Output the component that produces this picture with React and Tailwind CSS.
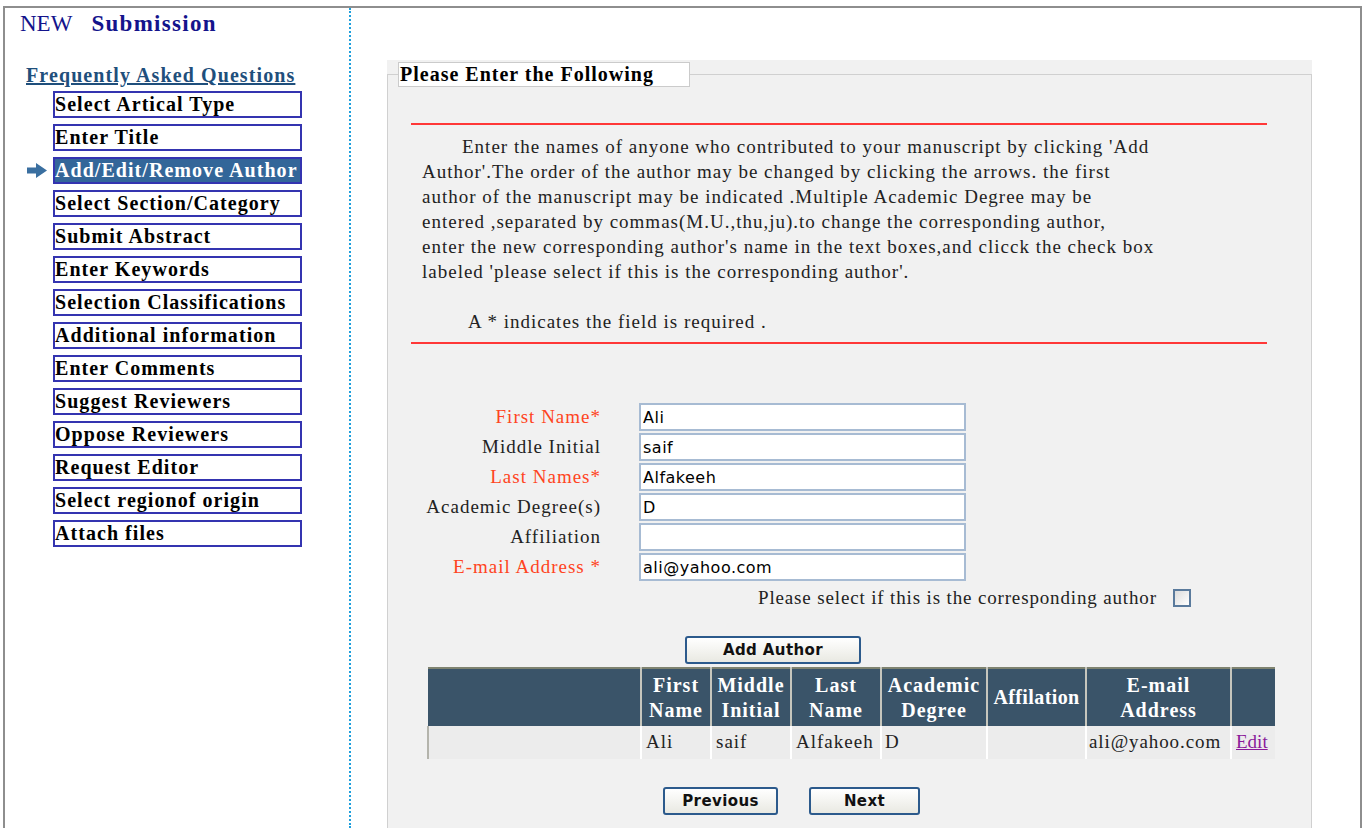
import React from 'react';

const MENU = [
  'Select Artical Type',
  'Enter Title',
  'Add/Edit/Remove Author',
  'Select Section/Category',
  'Submit Abstract',
  'Enter Keywords',
  'Selection Classifications',
  'Additional information',
  'Enter Comments',
  'Suggest Reviewers',
  'Oppose Reviewers',
  'Request Editor',
  'Select regionof origin',
  'Attach files',
];

const FIELDS = [
  { label: 'First Name*', value: 'Ali', req: true },
  { label: 'Middle Initial', value: 'saif' },
  { label: 'Last Names*', value: 'Alfakeeh', req: true },
  { label: 'Academic Degree(s)', value: 'D' },
  { label: 'Affiliation', value: '' },
  { label: 'E-mail Address *', value: 'ali@yahoo.com', req: true },
];

// intro text, broken where the original page wraps it
const INTRO = [
  "Enter the names of anyone who contributed to your manuscript by clicking 'Add",
  "Author'.The order of the author may be changed by clicking the arrows. the first",
  'author of the manuscript may be indicated .Multiple Academic Degree may be',
  'entered ,separated by commas(M.U.,thu,ju).to change the corresponding author,',
  "enter the new corresponding author's name in the text boxes,and clicck the check box",
  "labeled 'please select if this is the corresponding author'.",
];

const serif = "font-['Liberation_Serif','Times_New_Roman',serif]";
const sans = "font-['DejaVu_Sans','Liberation_Sans',sans-serif]";

function Btn({ w, children }) {
  return (
    <button
      className={`h-[28px] ${w} rounded-[3px] border-2 border-[#2c5a8c] bg-gradient-to-b from-white to-[#e9e9e2] text-[15px] font-bold tracking-[0.4px] text-[#111] ${sans}`}
    >
      {children}
    </button>
  );
}

export default function App() {
  return (
    <div className={`h-[832px] bg-white pt-[6px] pl-[3px] ${serif}`}>
      <div className="flex h-[822px] w-[1359px] border-l-2 border-r-2 border-t-2 border-[#8e8e8e]">
        {/* Sidebar */}
        <aside className="w-[346px] shrink-0 border-r-2 border-dotted border-[#1e9fdc]">
          <div className="ml-[15px] mt-[2px] text-[23px] leading-[28px] text-[#14148c]">
            <span>NEW</span>
            <span className="ml-[19px] font-bold tracking-[1.3px]">Submission</span>
          </div>
          <a href="#" className="ml-[21px] mt-[25px] block text-[20px] font-bold leading-[24px] tracking-[1.1px] text-[#1f4f7c] underline">
            Frequently Asked Questions
          </a>
          <ul className="mt-[4px] flex flex-col gap-[6px]">
            {MENU.map((m) => {
              const active = m === 'Add/Edit/Remove Author';
              return (
                <li key={m} className="flex items-center">
                  <span className="flex w-[48px] justify-end pr-[6px]">
                    {active && (
                      <svg width="20" height="15" viewBox="0 0 20 15">
                        <path d="M0 4.5h9V0l11 7.5L9 15v-4.5H0z" fill="#3a6fa0" />
                      </svg>
                    )}
                  </span>
                  <span
                    className={`h-[27px] w-[249px] border-2 border-[#3434b0] text-[20px] font-bold leading-[23px] tracking-[1.05px] ${
                      active ? 'bg-[#336699] text-white' : 'bg-white text-black'
                    }`}
                  >
                    {m}
                  </span>
                </li>
              );
            })}
          </ul>
        </aside>

        {/* Main */}
        <main className="flex-1 pl-[36px] pt-[52px]">
          <div className="w-[925px] bg-[#f1f1f1] pt-[2px]">
            <fieldset className="h-[766px] w-full min-w-0 border border-b-0 border-[#d0d0d0] pl-[23px] pr-[44px]">
              <legend className="-ml-[13px] h-[25px] w-[292px] border border-[#cbcbcb] bg-white pl-[1px] text-[20px] font-bold leading-[23px] tracking-[1px]">
                Please Enter the Following
              </legend>

              <div className="mt-[36px] h-[2px] bg-[#ff3838]" />

              <p className="ml-[11px] mt-[9px] whitespace-nowrap text-[19px] leading-[25px] tracking-[1px] text-[#222]">
                {INTRO.map((line, i) => (
                  <span key={i} className={`block ${i === 0 ? 'pl-[40px]' : ''}`}>
                    {line}
                  </span>
                ))}
              </p>
              <p className="ml-[57px] mt-[25px] text-[19px] leading-[25px] tracking-[1px] text-[#222]">
                A * indicates the field is required .
              </p>
              <div className="mt-[8px] h-[2px] bg-[#ff3838]" />

              {/* Form */}
              <div className="mt-[59px] flex flex-col gap-[2px]">
                {FIELDS.map((f) => (
                  <div key={f.label} className="flex items-center">
                    <label
                      className={`w-[190px] text-right text-[19px] leading-[28px] tracking-[1px] ${
                        f.req ? 'text-[#ff4422]' : 'text-[#222]'
                      }`}
                    >
                      {f.label}
                    </label>
                    <input
                      readOnly
                      value={f.value}
                      className={`ml-[38px] h-[28px] w-[327px] border-2 border-[#a7bbd3] bg-white px-[2px] text-[16px] tracking-[0.5px] text-black outline-none ${sans}`}
                    />
                  </div>
                ))}
              </div>

              <div className="mt-[6px] flex items-center pl-[347px] text-[19px] leading-[22px] tracking-[0.85px] text-[#222]">
                <span>Please select if this is the corresponding author</span>
                <span className="ml-[16px] h-[18px] w-[18px] shrink-0 border-2 border-[#5a7a9c] bg-gradient-to-br from-[#dcdcdc] to-white" />
              </div>

              <div className="mt-[27px] flex pl-[274px]">
                <Btn w="w-[176px]">Add Author</Btn>
              </div>

              {/* Authors table */}
              <table className="ml-[16px] mt-[3px] w-[847px] table-fixed border-collapse text-[19px] tracking-[1px]">
                <thead>
                  <tr className="h-[58px] border-t-2 border-[#7f8370] bg-[#3a5469] text-[20px] font-bold leading-[25px] text-white">
                    <th className="w-[213px]" />
                    <th className="w-[70px] border-x-2 border-[#c6c6bd]">First<br />Name</th>
                    <th className="w-[80px] border-x-2 border-[#c6c6bd]">Middle<br />Initial</th>
                    <th className="w-[90px] border-x-2 border-[#c6c6bd]">Last<br />Name</th>
                    <th className="w-[106px] border-x-2 border-[#c6c6bd]">Academic<br />Degree</th>
                    <th className="w-[99px] border-x-2 border-[#c6c6bd] tracking-[0.4px]">Affilation</th>
                    <th className="w-[145px] border-x-2 border-[#c6c6bd]">E-mail<br />Address</th>
                    <th className="w-[44px]" />
                  </tr>
                </thead>
                <tbody>
                  <tr className="h-[33px] bg-[#ececec] text-[#222]">
                    <td className="border-l-2 border-[#b4b4ac]" />
                    <td className="border-x-2 border-white pl-[4px]">Ali</td>
                    <td className="border-x-2 border-white pl-[4px]">saif</td>
                    <td className="border-x-2 border-white pl-[4px]">Alfakeeh</td>
                    <td className="border-x-2 border-white pl-[3px]">D</td>
                    <td className="border-x-2 border-white" />
                    <td className="whitespace-nowrap border-x-2 border-white pl-[2px] tracking-[0.9px]">ali@yahoo.com</td>
                    <td className="pl-[4px]">
                      <a href="#" className="text-[#8a1a9a] underline tracking-[0px]">Edit</a>
                    </td>
                  </tr>
                </tbody>
              </table>

              <div className="mt-[28px] flex gap-[31px] pl-[252px]">
                <Btn w="w-[115px]">Previous</Btn>
                <Btn w="w-[111px]">Next</Btn>
              </div>
            </fieldset>
          </div>
        </main>
      </div>
    </div>
  );
}
